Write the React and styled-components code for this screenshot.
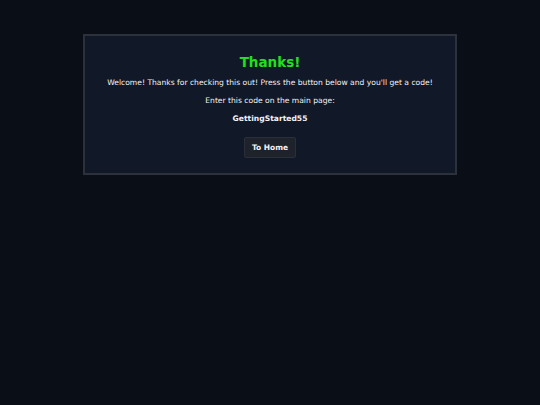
import React from 'react';
import styled, { createGlobalStyle } from 'styled-components';

const GlobalStyle = createGlobalStyle`
  html, body {
    margin: 0;
    padding: 0;
    background: #0a0e16;
    font-family: 'DejaVu Sans', Verdana, sans-serif;
    color: #f1f3f6;
  }
`;

const Page = styled.div`
  min-height: 405px;
  display: flex;
  justify-content: center;
  padding-top: 34px;
  box-sizing: border-box;
`;

const Card = styled.div`
  width: 374px;
  height: 141px;
  box-sizing: border-box;
  background: #111827;
  border: 2px solid #2c313b;
  display: flex;
  flex-direction: column;
  align-items: center;
  padding-top: 16px;
`;

const Title = styled.h1`
  margin: 0;
  font-size: 13.5px;
  font-weight: bold;
  color: #22e01e;
  line-height: 20px;
`;

const Text = styled.p`
  margin: ${(p) => p.$top || 0}px 0 0;
  font-size: 7.6px;
  line-height: 10px;
  color: #f1f3f6;
  font-weight: ${(p) => (p.$bold ? 'bold' : 'normal')};
`;

const Button = styled.button`
  margin-top: 13px;
  width: 52px;
  height: 21px;
  background: #1e222b;
  border: 1px solid #2a2f39;
  border-radius: 2px;
  color: #f3f4f6;
  font-family: inherit;
  font-size: 7.5px;
  font-weight: bold;
  cursor: pointer;
  padding: 0;
`;

export default function App() {
  return (
    <>
      <GlobalStyle />
      <Page>
        <Card>
          <Title>Thanks!</Title>
          <Text $top={6}>Welcome! Thanks for checking this out! Press the button below and you'll get a code!</Text>
          <Text $top={8}>Enter this code on the main page:</Text>
          <Text $top={8} $bold>GettingStarted55</Text>
          <Button>To Home</Button>
        </Card>
      </Page>
    </>
  );
}
